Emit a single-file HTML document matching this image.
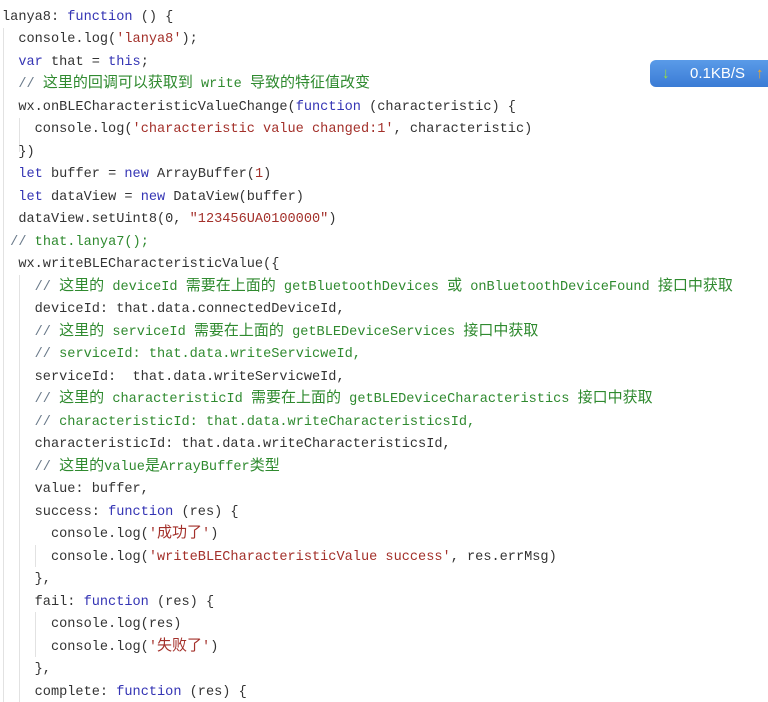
<!DOCTYPE html>
<html><head><meta charset="utf-8"><style>
html,body{margin:0;padding:0;background:#fff;width:768px;height:702px;overflow:hidden;position:relative}
#code{position:absolute;left:2px;top:-15.75px;font-family:"Liberation Mono","Noto Sans CJK SC",monospace;font-size:13.6px;color:#333}
.l{height:22.5px;line-height:22.5px;white-space:pre;overflow:visible}
.k{color:#3434b4}.s{color:#a3302a}.c{color:#2f8a2f}.cs{color:#6a7a8a}
.z{font-family:"Noto Sans CJK SC",sans-serif;font-size:15px;line-height:1px}
.g{position:absolute;width:1px;background:#e2e2e2}
#badge{position:absolute;left:650px;top:60px;width:130px;height:27px;border-radius:6px;background:linear-gradient(#5a9be8,#3a7bd5);color:#fff;font-family:"Liberation Sans",sans-serif;font-size:15px;line-height:27px}
</style></head><body>
<div class="g" style="left:3px;top:28px;height:680px"></div>
<div class="g" style="left:19px;top:118px;height:34px"></div>
<div class="g" style="left:19px;top:275px;height:430px"></div>
<div class="g" style="left:35px;top:545px;height:22px"></div>
<div class="g" style="left:35px;top:612px;height:45px"></div>
<div id="code"><div class="l">}}</div><div class="l">lanya8: <span class="k">function</span> () {</div><div class="l">  console.log(<span class="s">'lanya8'</span>);</div><div class="l">  <span class="k">var</span> that = <span class="k">this</span>;</div><div class="l">  <span class="c"><span class="cs">//</span> <span class="z">这里的回调可以获取到</span> write <span class="z">导致的特征值改变</span></span></div><div class="l">  wx.onBLECharacteristicValueChange(<span class="k">function</span> (characteristic) {</div><div class="l">    console.log(<span class="s">'characteristic value changed:1'</span>, characteristic)</div><div class="l">  })</div><div class="l">  <span class="k">let</span> buffer = <span class="k">new</span> ArrayBuffer(<span class="s">1</span>)</div><div class="l">  <span class="k">let</span> dataView = <span class="k">new</span> DataView(buffer)</div><div class="l">  dataView.setUint8(0, <span class="s">"123456UA0100000"</span>)</div><div class="l"> <span class="c"><span class="cs">//</span> that.lanya7();</span></div><div class="l">  wx.writeBLECharacteristicValue({</div><div class="l">    <span class="c"><span class="cs">//</span> <span class="z">这里的</span> deviceId <span class="z">需要在上面的</span> getBluetoothDevices <span class="z">或</span> onBluetoothDeviceFound <span class="z">接口中获取</span></span></div><div class="l">    deviceId: that.data.connectedDeviceId,</div><div class="l">    <span class="c"><span class="cs">//</span> <span class="z">这里的</span> serviceId <span class="z">需要在上面的</span> getBLEDeviceServices <span class="z">接口中获取</span></span></div><div class="l">    <span class="c"><span class="cs">//</span> serviceId: that.data.writeServicweId,</span></div><div class="l">    serviceId:  that.data.writeServicweId,</div><div class="l">    <span class="c"><span class="cs">//</span> <span class="z">这里的</span> characteristicId <span class="z">需要在上面的</span> getBLEDeviceCharacteristics <span class="z">接口中获取</span></span></div><div class="l">    <span class="c"><span class="cs">//</span> characteristicId: that.data.writeCharacteristicsId,</span></div><div class="l">    characteristicId: that.data.writeCharacteristicsId,</div><div class="l">    <span class="c"><span class="cs">//</span> <span class="z">这里的</span>value<span class="z">是</span>ArrayBuffer<span class="z">类型</span></span></div><div class="l">    value: buffer,</div><div class="l">    success: <span class="k">function</span> (res) {</div><div class="l">      console.log(<span class="s">'<span class="z">成功了</span>'</span>)</div><div class="l">      console.log(<span class="s">'writeBLECharacteristicValue success'</span>, res.errMsg)</div><div class="l">    },</div><div class="l">    fail: <span class="k">function</span> (res) {</div><div class="l">      console.log(res)</div><div class="l">      console.log(<span class="s">'<span class="z">失败了</span>'</span>)</div><div class="l">    },</div><div class="l">    complete: <span class="k">function</span> (res) {</div></div>
<div id="badge"><span style="position:absolute;left:12px;color:#9be03a;font-weight:bold">↓</span><span style="position:absolute;left:40px">0.1KB/S</span><span style="position:absolute;left:106px;color:#f5a623;font-weight:bold">↑</span></div>
</body></html>
